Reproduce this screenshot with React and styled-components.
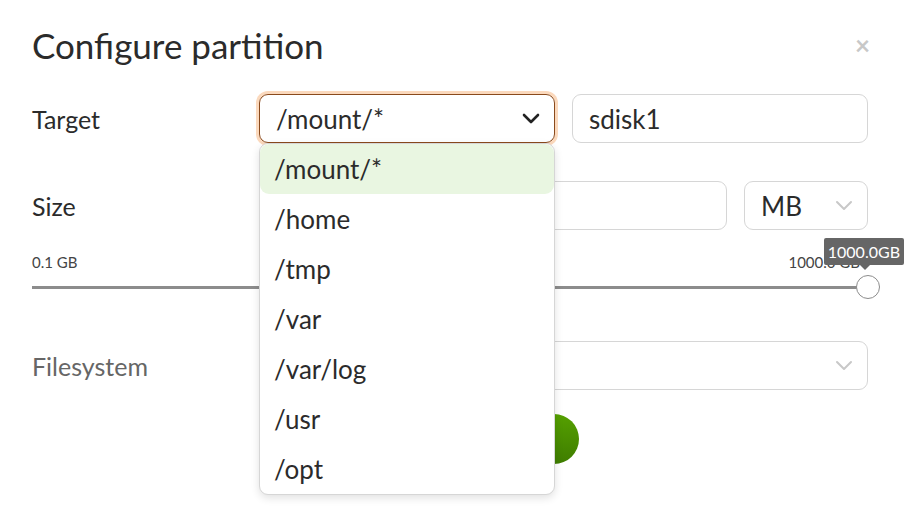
import React from "react";
import styled, { createGlobalStyle } from "styled-components";

const Global = createGlobalStyle`
  body { margin: 0; background: #fff; font-family: Lato, "Noto Sans", sans-serif; color: #222; }
`;

const Dialog = styled.div`
  width: 904px;
  height: 508px;
  overflow: hidden;
  padding: 22px 36px 0 32px;
  box-sizing: border-box;
`;

const Header = styled.div`
  display: flex;
  justify-content: space-between;
  align-items: center;
  height: 46px;
`;

const Title = styled.h1`
  margin: 0;
  font-size: 35px;
  font-weight: 400;
  color: #2b2b2b;
`;

const Close = styled.span`
  color: #c8c8c8;
  font-size: 26px;
  font-weight: 700;
  margin-right: -2px;
`;

const Row = styled.div`
  display: grid;
  grid-template-columns: 227px 1fr;
  align-items: center;
  margin-top: ${(p) => p.$mt}px;
`;

const Label = styled.div`
  font-size: 25px;
  color: ${(p) => (p.$muted ? "#666" : "#2b2b2b")};
`;

const Controls = styled.div`
  display: flex;
  gap: 17px;
  position: relative;
`;

const Box = styled.div`
  flex: 1;
  ${(p) => p.$width && `flex: 0 0 ${p.$width}px;`}
  height: 49px;
  box-sizing: border-box;
  border: 1px solid ${(p) => (p.$focus ? "#8a4a1c" : "#d6d6d6")};
  box-shadow: ${(p) => (p.$focus ? "0 0 0 3px #fbd9bd" : "none")};
  border-radius: 9px;
  display: flex;
  align-items: center;
  justify-content: space-between;
  padding: 0 14px 0 16px;
  font-size: 26px;
  color: #2b2b2b;
`;

const Chevron = ({ color = "#222", w = 2.6 }) => (
  <svg width="18" height="12" viewBox="0 0 18 12">
    <path d="M2 2 L9 9 L16 2" fill="none" stroke={color} strokeWidth={w} strokeLinecap="round" strokeLinejoin="round" />
  </svg>
);

const Menu = styled.ul`
  position: absolute;
  top: 49px;
  left: 0;
  width: 294px;
  margin: 0;
  padding: 0;
  list-style: none;
  background: #fff;
  border: 1px solid #d6d6d6;
  border-radius: 9px;
  box-shadow: 0 3px 8px rgba(0, 0, 0, 0.12);
  z-index: 5;
`;

const Item = styled.li`
  height: 50px;
  display: flex;
  align-items: center;
  padding-left: 14px;
  font-size: 26px;
  color: #2b2b2b;
  border-radius: 9px;
  background: ${(p) => (p.$active ? "#e9f6e1" : "transparent")};
`;

const Scale = styled.div`
  display: flex;
  justify-content: space-between;
  font-size: 15px;
  color: #444;
  margin-top: 23px;
`;

const Track = styled.div`
  position: relative;
  height: 3px;
  background: #8c8c8c;
  margin-top: 15px;
`;

const Thumb = styled.div`
  position: absolute;
  right: -12px;
  top: -11px;
  width: 22px;
  height: 22px;
  border-radius: 50%;
  border: 1.5px solid #8c8c8c;
  background: #fff;
`;

const Tip = styled.div`
  position: absolute;
  right: -36px;
  top: -48px;
  background: #666;
  color: #fff;
  font-size: 16px;
  padding: 4px 4px;
  border-radius: 2px;
  z-index: 2;
  &:after {
    content: "";
    position: absolute;
    left: 36px;
    bottom: -5px;
    border: 5px solid transparent;
    border-bottom: 0;
    border-top-color: #666;
  }
`;

const Button = styled.div`
  width: 320px;
  height: 50px;
  border-radius: 25px;
  background: linear-gradient(#55a000, #3f7d00);
`;

const paths = ["/mount/*", "/home", "/tmp", "/var", "/var/log", "/usr", "/opt"];

export default function App() {
  return (
    <Dialog>
      <Global />
      <Header>
        <Title>Configure partition</Title>
        <Close>×</Close>
      </Header>
      <Row $mt={26}>
        <Label>Target</Label>
        <Controls>
          <Box $focus>
            /mount/* <Chevron />
          </Box>
          <Box>sdisk1</Box>
          <Menu>
            {paths.map((p, i) => (
              <Item key={p} $active={i === 0}>{p}</Item>
            ))}
          </Menu>
        </Controls>
      </Row>
      <Row $mt={38}>
        <Label>Size</Label>
        <Controls>
          <Box>1000</Box>
          <Box $width={124}>
            MB <Chevron color="#c8c8c8" w={2} />
          </Box>
        </Controls>
      </Row>
      <Scale>
        <span>0.1 GB</span>
        <span style={{ marginRight: 8 }}>1000.0 GB</span>
      </Scale>
      <Track>
        <Tip>1000.0GB</Tip>
        <Thumb />
      </Track>
      <Row $mt={52}>
        <Label $muted>Filesystem</Label>
        <Controls>
          <Box>
            ext4 <Chevron color="#c8c8c8" w={2} />
          </Box>
        </Controls>
      </Row>
      <Row $mt={24}>
        <span />
        <Button />
      </Row>
    </Dialog>
  );
}
